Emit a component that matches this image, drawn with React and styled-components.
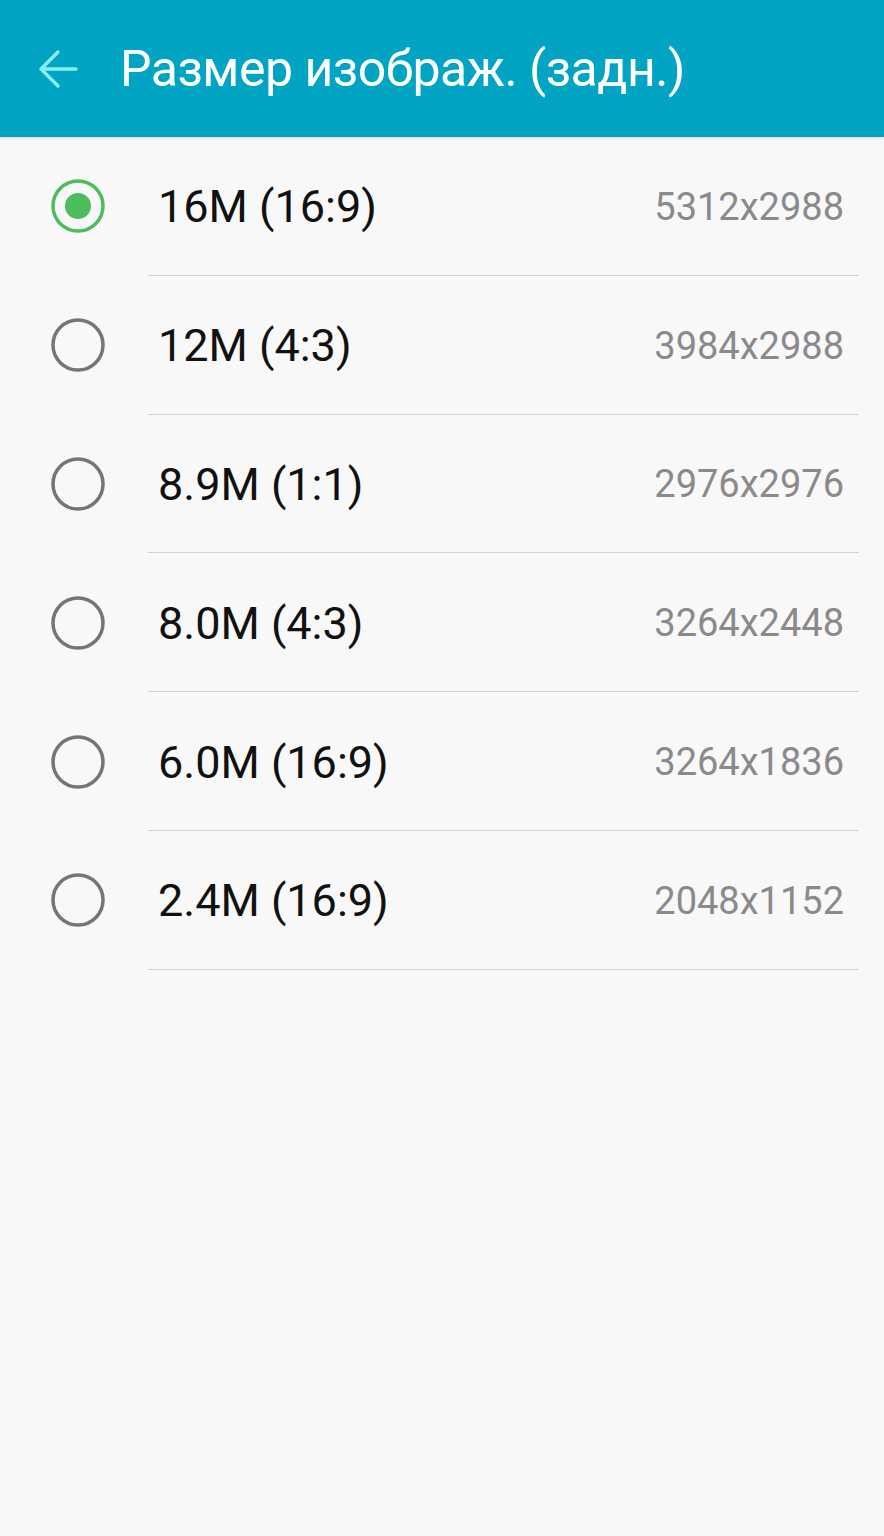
import styled, { createGlobalStyle } from 'styled-components';

const sizes = [
  { label: '16M (16:9)', res: '5312x2988' },
  { label: '12M (4:3)', res: '3984x2988' },
  { label: '8.9M (1:1)', res: '2976x2976' },
  { label: '8.0M (4:3)', res: '3264x2448' },
  { label: '6.0M (16:9)', res: '3264x1836' },
  { label: '2.4M (16:9)', res: '2048x1152' },
];

function Radio({ checked }) {
  return (
    <RadioSvg width="56" height="56" viewBox="0 0 56 56">
      <circle cx="28" cy="28" r="25" fill="none" stroke={checked ? '#4cbd5a' : '#757575'} strokeWidth="3.5" />
      {checked && <circle cx="28" cy="28" r="13" fill="#4cbd5a" />}
    </RadioSvg>
  );
}

export default function App() {
  return (
    <Page>
      <GlobalStyle />
      <Header>
        <BackArrow width="44" height="44" viewBox="0 0 44 44" aria-label="Back">
          <path d="M40 22H5M22 5L5 22l17 17" fill="none" stroke="#86eeee" strokeWidth="3.5" strokeLinecap="round" strokeLinejoin="round" />
        </BackArrow>
        <Title>Размер изображ. (задн.)</Title>
      </Header>
      <List>
        {sizes.map((s, i) => (
          <Row key={s.label}>
            <RadioCell>
              <Radio checked={i === 0} />
            </RadioCell>
            <RowBody>
              <Label>{s.label}</Label>
              <Resolution>{s.res}</Resolution>
            </RowBody>
          </Row>
        ))}
      </List>
    </Page>
  );
}

const GlobalStyle = createGlobalStyle`
  html, body {
    margin: 0;
    padding: 0;
    background: #f8f8f8;
  }
  body {
    font-family: Roboto, "Noto Sans", sans-serif;
  }
`;
const Page = styled.div`
  width: 884px;
  min-height: 1536px;
  background: #f8f8f8;
`;
const Header = styled.header`
  height: 137px;
  background: #01a5c3;
  display: flex;
  align-items: center;
  box-shadow: 0 1px 3px rgba(0, 0, 0, 0.15);
  padding-left: 36px;
  box-sizing: border-box;
`;
const BackArrow = styled.svg`
  flex-shrink: 0;
  margin-right: 40px;
`;
const Title = styled.h1`
  margin: 0;
  color: #ffffff;
  font-family: Roboto, sans-serif;
  font-weight: 400;
  font-size: 50px;
  letter-spacing: -0.5px;
  white-space: nowrap;
`;
const List = styled.ul`
  list-style: none;
  margin: 0;
  padding: 0;
`;
const Row = styled.li`
  display: flex;
  align-items: stretch;
  height: 138.8px;
`;
const RadioCell = styled.div`
  width: 148px;
  flex-shrink: 0;
  display: flex;
  align-items: center;
  padding-left: 50px;
  box-sizing: border-box;
`;
const RadioSvg = styled.svg`
  display: block;
`;
const RowBody = styled.div`
  flex: 1;
  display: flex;
  align-items: center;
  justify-content: space-between;
  margin-right: 25px;
  padding: 2px 15px 0 10px;
  border-bottom: 1.5px solid #d2d2d2;
`;
const Label = styled.span`
  font-size: 45px;
  color: #111111;
`;
const Resolution = styled.span`
  font-size: 38px;
  color: #8a8a8a;
`;
